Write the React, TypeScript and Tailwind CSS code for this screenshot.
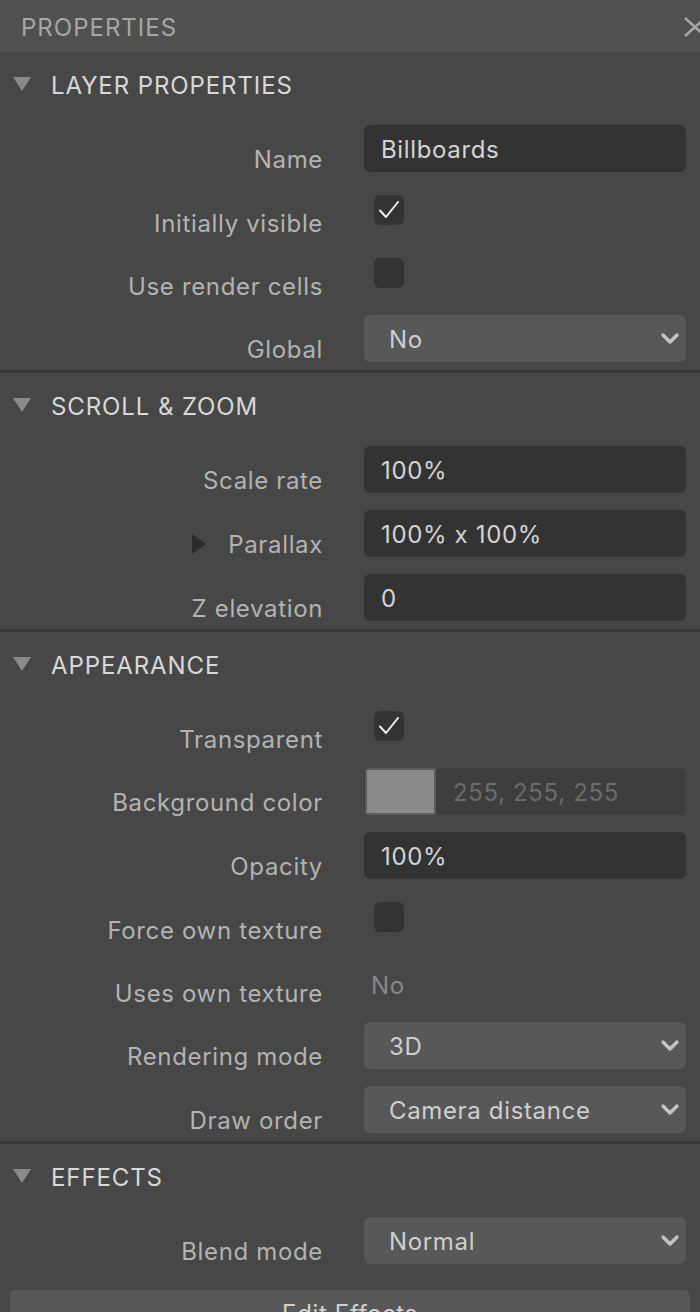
import React from "react";

const font = { fontFamily: "Inter, 'Noto Sans', sans-serif" };

function Tri() {
  return (
    <svg width="18" height="14" viewBox="0 0 18 14" className="shrink-0">
      <polygon points="0,0 18,0 9,14" fill="#8a8a8a" />
    </svg>
  );
}

function Chevron() {
  return (
    <svg width="20" height="14" viewBox="0 0 20 14" className="shrink-0">
      <polyline points="3,3 10,10 17,3" fill="none" stroke="#c4c4c4" strokeWidth="3.5" strokeLinecap="round" strokeLinejoin="round" />
    </svg>
  );
}

function Check() {
  return (
    <svg width="30" height="30" viewBox="0 0 30 30">
      <polyline points="6,15.5 12,22 24,7" fill="none" stroke="#f0f0f0" strokeWidth="2" strokeLinecap="round" strokeLinejoin="round" />
    </svg>
  );
}

function Row({ label, h, children, extra }: { label: string; h: string; children: React.ReactNode; extra?: React.ReactNode }) {
  return (
    <div className={`flex ${h}`}>
      <div className="w-[323px] h-[47px] flex items-end justify-end shrink-0">
        <div className="flex items-center mb-[-2px] text-[24px] leading-[28px] tracking-[0.65px] text-[#b3b3b3]">
          {extra}
          <span>{label}</span>
        </div>
      </div>
      <div className="ml-[41px] w-[322px] shrink-0">{children}</div>
    </div>
  );
}

function TextInput({ value }: { value: string }) {
  return (
    <div className="h-[47px] rounded-[6px] bg-[#333333] flex items-center pt-[2px] pl-[17px] text-[24px] tracking-[0.65px] text-[#d4d4d4]">
      {value}
    </div>
  );
}

function Select({ value }: { value: string }) {
  return (
    <div className="h-[47px] rounded-[6px] bg-[#585858] flex items-center justify-between pl-[25px] pr-[6px] text-[24px] tracking-[0.65px] text-[#cfcfcf]">
      <span className="pt-[3px]">{value}</span>
      <Chevron />
    </div>
  );
}

function Checkbox({ checked }: { checked: boolean }) {
  return (
    <div className="ml-[10px] mt-[6px] w-[30px] h-[30px] rounded-[6px] bg-[#333333] flex items-center justify-center">
      {checked && <Check />}
    </div>
  );
}

function Section({ title, children, last }: { title: string; children: React.ReactNode; last?: boolean }) {
  return (
    <div className={last ? "" : "border-b-[3px] border-[#363636]"}>
      <div className="h-[73px] flex items-start pt-[20px]">
        <div className="ml-[13px] mt-[5px]">
          <Tri />
        </div>
        <span className="ml-[20px] text-[24px] leading-[28px] tracking-[0.9px] text-[#d8d8d8]">{title}</span>
      </div>
      <div className={last ? "" : "pb-[8px]"}>{children}</div>
    </div>
  );
}

export default function App() {
  return (
    <div className="w-[700px] h-[1312px] bg-[#474747] overflow-hidden" style={font}>
      <div className="h-[52px] bg-[#505050] flex items-center justify-between pl-[21px]">
        <span className="mt-[4px] text-[24px] leading-[28px] tracking-[1px] text-[#a6a6a6]">PROPERTIES</span>
        <svg width="24" height="22" viewBox="0 0 24 22" className="mr-[-7px] mt-[2px]">
          <line x1="2" y1="2" x2="22" y2="20" stroke="#a6a6a6" strokeWidth="2.5" />
          <line x1="22" y1="2" x2="2" y2="20" stroke="#a6a6a6" strokeWidth="2.5" />
        </svg>
      </div>

      <Section title="LAYER PROPERTIES">
        <Row label="Name" h="h-[64px]">
          <TextInput value="Billboards" />
        </Row>
        <Row label="Initially visible" h="h-[63px]">
          <Checkbox checked />
        </Row>
        <Row label="Use render cells" h="h-[63px]">
          <Checkbox checked={false} />
        </Row>
        <Row label="Global" h="h-[47px]">
          <Select value="No" />
        </Row>
      </Section>

      <Section title="SCROLL & ZOOM">
        <Row label="Scale rate" h="h-[64px]">
          <TextInput value="100%" />
        </Row>
        <Row
          label="Parallax"
          h="h-[64px]"
          extra={
            <svg width="14" height="20" viewBox="0 0 14 20" className="mr-[22px] mt-[-2px]">
              <polygon points="0,0 14,10 0,20" fill="#2b2b2b" />
            </svg>
          }
        >
          <TextInput value="100% x 100%" />
        </Row>
        <Row label="Z elevation" h="h-[47px]">
          <TextInput value="0" />
        </Row>
      </Section>

      <Section title="APPEARANCE">
        <Row label="Transparent" h="h-[63px]">
          <Checkbox checked />
        </Row>
        <Row label="Background color" h="h-[64px]">
          <div className="h-[47px] rounded-[6px] bg-[#3e3e3e] flex items-center overflow-hidden">
            <div className="ml-[1px] w-[71px] h-[47px] bg-[#8a8a8a] border-[2px] border-[#5c5c5c]" />
            <span className="ml-[17px] pt-[2px] text-[24px] tracking-[0.65px] text-[#6b6b6b]">255, 255, 255</span>
          </div>
        </Row>
        <Row label="Opacity" h="h-[64px]">
          <TextInput value="100%" />
        </Row>
        <Row label="Force own texture" h="h-[63px]">
          <Checkbox checked={false} />
        </Row>
        <Row label="Uses own texture" h="h-[63px]">
          <div className="pl-[7px] pt-[13px] text-[24px] leading-[28px] tracking-[0.65px] text-[#888888]">No</div>
        </Row>
        <Row label="Rendering mode" h="h-[64px]">
          <Select value="3D" />
        </Row>
        <Row label="Draw order" h="h-[47px]">
          <Select value="Camera distance" />
        </Row>
      </Section>

      <Section title="EFFECTS" last>
        <Row label="Blend mode" h="h-[47px]">
          <Select value="Normal" />
        </Row>
        <div className="mt-[26px] mx-[10px] h-[47px] rounded-[6px] bg-[#585858] flex items-center justify-center text-[24px] tracking-[0.65px] text-[#d0d0d0]">
          Edit Effects
        </div>
      </Section>
    </div>
  );
}
